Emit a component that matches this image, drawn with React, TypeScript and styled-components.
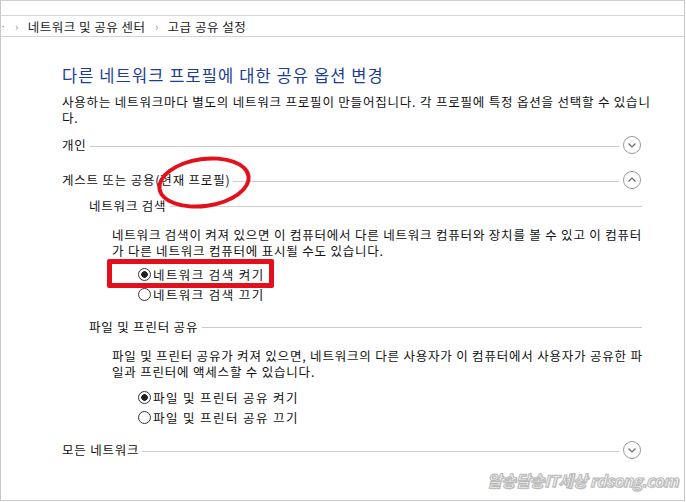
import styled, { createGlobalStyle } from "styled-components"

const GlobalStyle = createGlobalStyle`
  html, body {
    margin: 0;
    padding: 0;
    background: #ffffff;
  }
  body {
    font-family: "Noto Sans CJK KR", "Noto Sans", sans-serif;
    font-size: 12.5px;
    letter-spacing: 0.8px;
    color: #111;
  }
`

const CircleIcon = ({ up }: { up?: boolean }) => (
  <svg width="20" height="20" viewBox="0 0 20 20">
    <circle cx="10" cy="10" r="8.5" fill="none" stroke="#9a9a9a" strokeWidth="1" />
    {up ? (
      <path d="M6.5 11.5 L10 8 L13.5 11.5" fill="none" stroke="#6a6a6a" strokeWidth="1.2" />
    ) : (
      <path d="M6.5 8.5 L10 12 L13.5 8.5" fill="none" stroke="#6a6a6a" strokeWidth="1.2" />
    )}
  </svg>
)

const App = () => {
  return (
    <>
      <GlobalStyle />
      <Window>
        <TopStrip />
        <Breadcrumb>
          <Crumb $faded>·</Crumb>
          <Sep>›</Sep>
          <Crumb>네트워크 및 공유 센터</Crumb>
          <Sep>›</Sep>
          <Crumb>고급 공유 설정</Crumb>
        </Breadcrumb>
        <Content>
          <Heading>다른 네트워크 프로필에 대한 공유 옵션 변경</Heading>
          <Intro>
            사용하는 네트워크마다 별도의 네트워크 프로필이 만들어집니다. 각 프로필에 특정 옵션을 선택할 수 있습니다.
          </Intro>

          <ProfileRow $top={9}>
            <ProfileLabel>개인</ProfileLabel>
            <Rule />
            <CircleIcon />
          </ProfileRow>
          <ProfileRow $top={15}>
            <ProfileLabel>게스트 또는 공용(현재 프로필)</ProfileLabel>
            <Rule />
            <CircleIcon up />
          </ProfileRow>

          <SubSection>
            <SubHeader>
              <span>네트워크 검색</span>
              <Rule />
            </SubHeader>
            <SubText>
              네트워크 검색이 켜져 있으면 이 컴퓨터에서 다른 네트워크 컴퓨터와 장치를 볼 수 있고 이 컴퓨터가 다른 네트워크 컴퓨터에 표시될 수도 있습니다.
            </SubText>
            <RadioGroup>
              <RadioRow>
                <Radio $checked />
                네트워크 검색 켜기
              </RadioRow>
              <RadioRow>
                <Radio />
                네트워크 검색 끄기
              </RadioRow>
            </RadioGroup>
          </SubSection>

          <SubSection $top={14}>
            <SubHeader>
              <span>파일 및 프린터 공유</span>
              <Rule />
            </SubHeader>
            <SubText>
              파일 및 프린터 공유가 켜져 있으면, 네트워크의 다른 사용자가 이 컴퓨터에서 사용자가 공유한 파일과 프린터에 액세스할 수 있습니다.
            </SubText>
            <RadioGroup $top={7}>
              <RadioRow>
                <Radio $checked />
                파일 및 프린터 공유 켜기
              </RadioRow>
              <RadioRow>
                <Radio />
                파일 및 프린터 공유 끄기
              </RadioRow>
            </RadioGroup>
          </SubSection>

          <ProfileRow $top={13}>
            <ProfileLabel>모든 네트워크</ProfileLabel>
            <Rule />
            <CircleIcon />
          </ProfileRow>
        </Content>

        <MarkEllipse />
        <MarkBox />
        <Watermark>알송달송IT세상 rdsong.com</Watermark>
      </Window>
    </>
  )
}

const Window = styled.div`
  position: relative;
  width: 685px;
  height: 501px;
  border-left: 1px solid #c8c8c8;
  border-right: 1px solid #c8c8c8;
  border-bottom: 1px solid #c8c8c8;
  box-sizing: border-box;
  overflow: hidden;
  background: #fff;
`
const TopStrip = styled.div`
  height: 14px;
  border-top: 1px solid #cfcfcf;
`
const Breadcrumb = styled.div`
  height: 20px;
  border-top: 1px solid #d4d4d4;
  border-bottom: 1px solid #d4d4d4;
  display: flex;
  align-items: center;
  letter-spacing: 0.5px;
`
const Crumb = styled.span<{ $faded?: boolean }>`
  color: ${(p) => (p.$faded ? "#888" : "#1a1a1a")};
  font-family: ${(p) => (p.$faded ? '"Liberation Sans", sans-serif' : "inherit")};
  white-space: nowrap;
`
const Sep = styled.span`
  width: 22px;
  text-align: center;
  color: #8a8a8a;
  font-size: 11px;
  letter-spacing: 0;
`
const Content = styled.div`
  padding-left: 61px;
  width: 580px;
`
const Heading = styled.h1`
  margin: 28px 0 0;
  font-size: 16.5px;
  line-height: 20px;
  letter-spacing: 1.1px;
  font-weight: 400;
  color: #1a3d96;
  white-space: nowrap;
`
const Intro = styled.p`
  margin: 9px 0 0;
  width: 600px;
  line-height: 16px;
  color: #111;
`
const ProfileRow = styled.div<{ $top: number }>`
  margin-top: ${(p) => p.$top}px;
  height: 20px;
  display: flex;
  align-items: center;
  gap: 3px;
`
const ProfileLabel = styled.span`
  white-space: nowrap;
  line-height: 20px;
`
const Rule = styled.div`
  flex: 1;
  height: 0;
  border-top: 1px solid #cdcdcd;
  margin-top: 3px;
`
const SubSection = styled.div<{ $top?: number }>`
  margin-top: ${(p) => p.$top ?? 7}px;
  padding-left: 27px;
`
const SubHeader = styled.div`
  height: 16px;
  display: flex;
  align-items: center;
  gap: 4px;
  white-space: nowrap;
`
const SubText = styled.p`
  margin: 14px 0 0 23px;
  line-height: 16px;
  width: 531px;
`
const RadioGroup = styled.div<{ $top?: number }>`
  margin: ${(p) => p.$top ?? 5}px 0 0 49px;
  display: flex;
  flex-direction: column;
`
const RadioRow = styled.label`
  height: 20px;
  display: flex;
  align-items: center;
  gap: 2px;
  white-space: nowrap;
  letter-spacing: 1.4px;
`
const Radio = styled.span<{ $checked?: boolean }>`
  width: 11px;
  height: 11px;
  border-radius: 50%;
  border: 1px solid #333;
  background: ${(p) =>
    p.$checked ? "radial-gradient(circle, #222 0 3px, #fff 3.6px)" : "#fff"};
`
const MarkEllipse = styled.div`
  position: absolute;
  left: 156px;
  top: 157px;
  width: 86px;
  height: 43px;
  border: 4px solid #e3101c;
  border-radius: 50%;
  transform: rotate(-8deg);
`
const MarkBox = styled.div`
  position: absolute;
  left: 106px;
  top: 259px;
  width: 157px;
  height: 19px;
  border: 5px solid #e3101c;
  border-radius: 2px;
`
const Watermark = styled.div`
  position: absolute;
  right: 6px;
  bottom: 8px;
  font-family: "Noto Sans CJK KR", "Liberation Sans", sans-serif;
  font-size: 16px;
  font-weight: 700;
  font-style: italic;
  letter-spacing: -0.5px;
  color: #f4f4f4;
  -webkit-text-stroke: 1px #b9b9b9;
  text-shadow: 1px 1px 0 #d0d0d0;
`

export default App
